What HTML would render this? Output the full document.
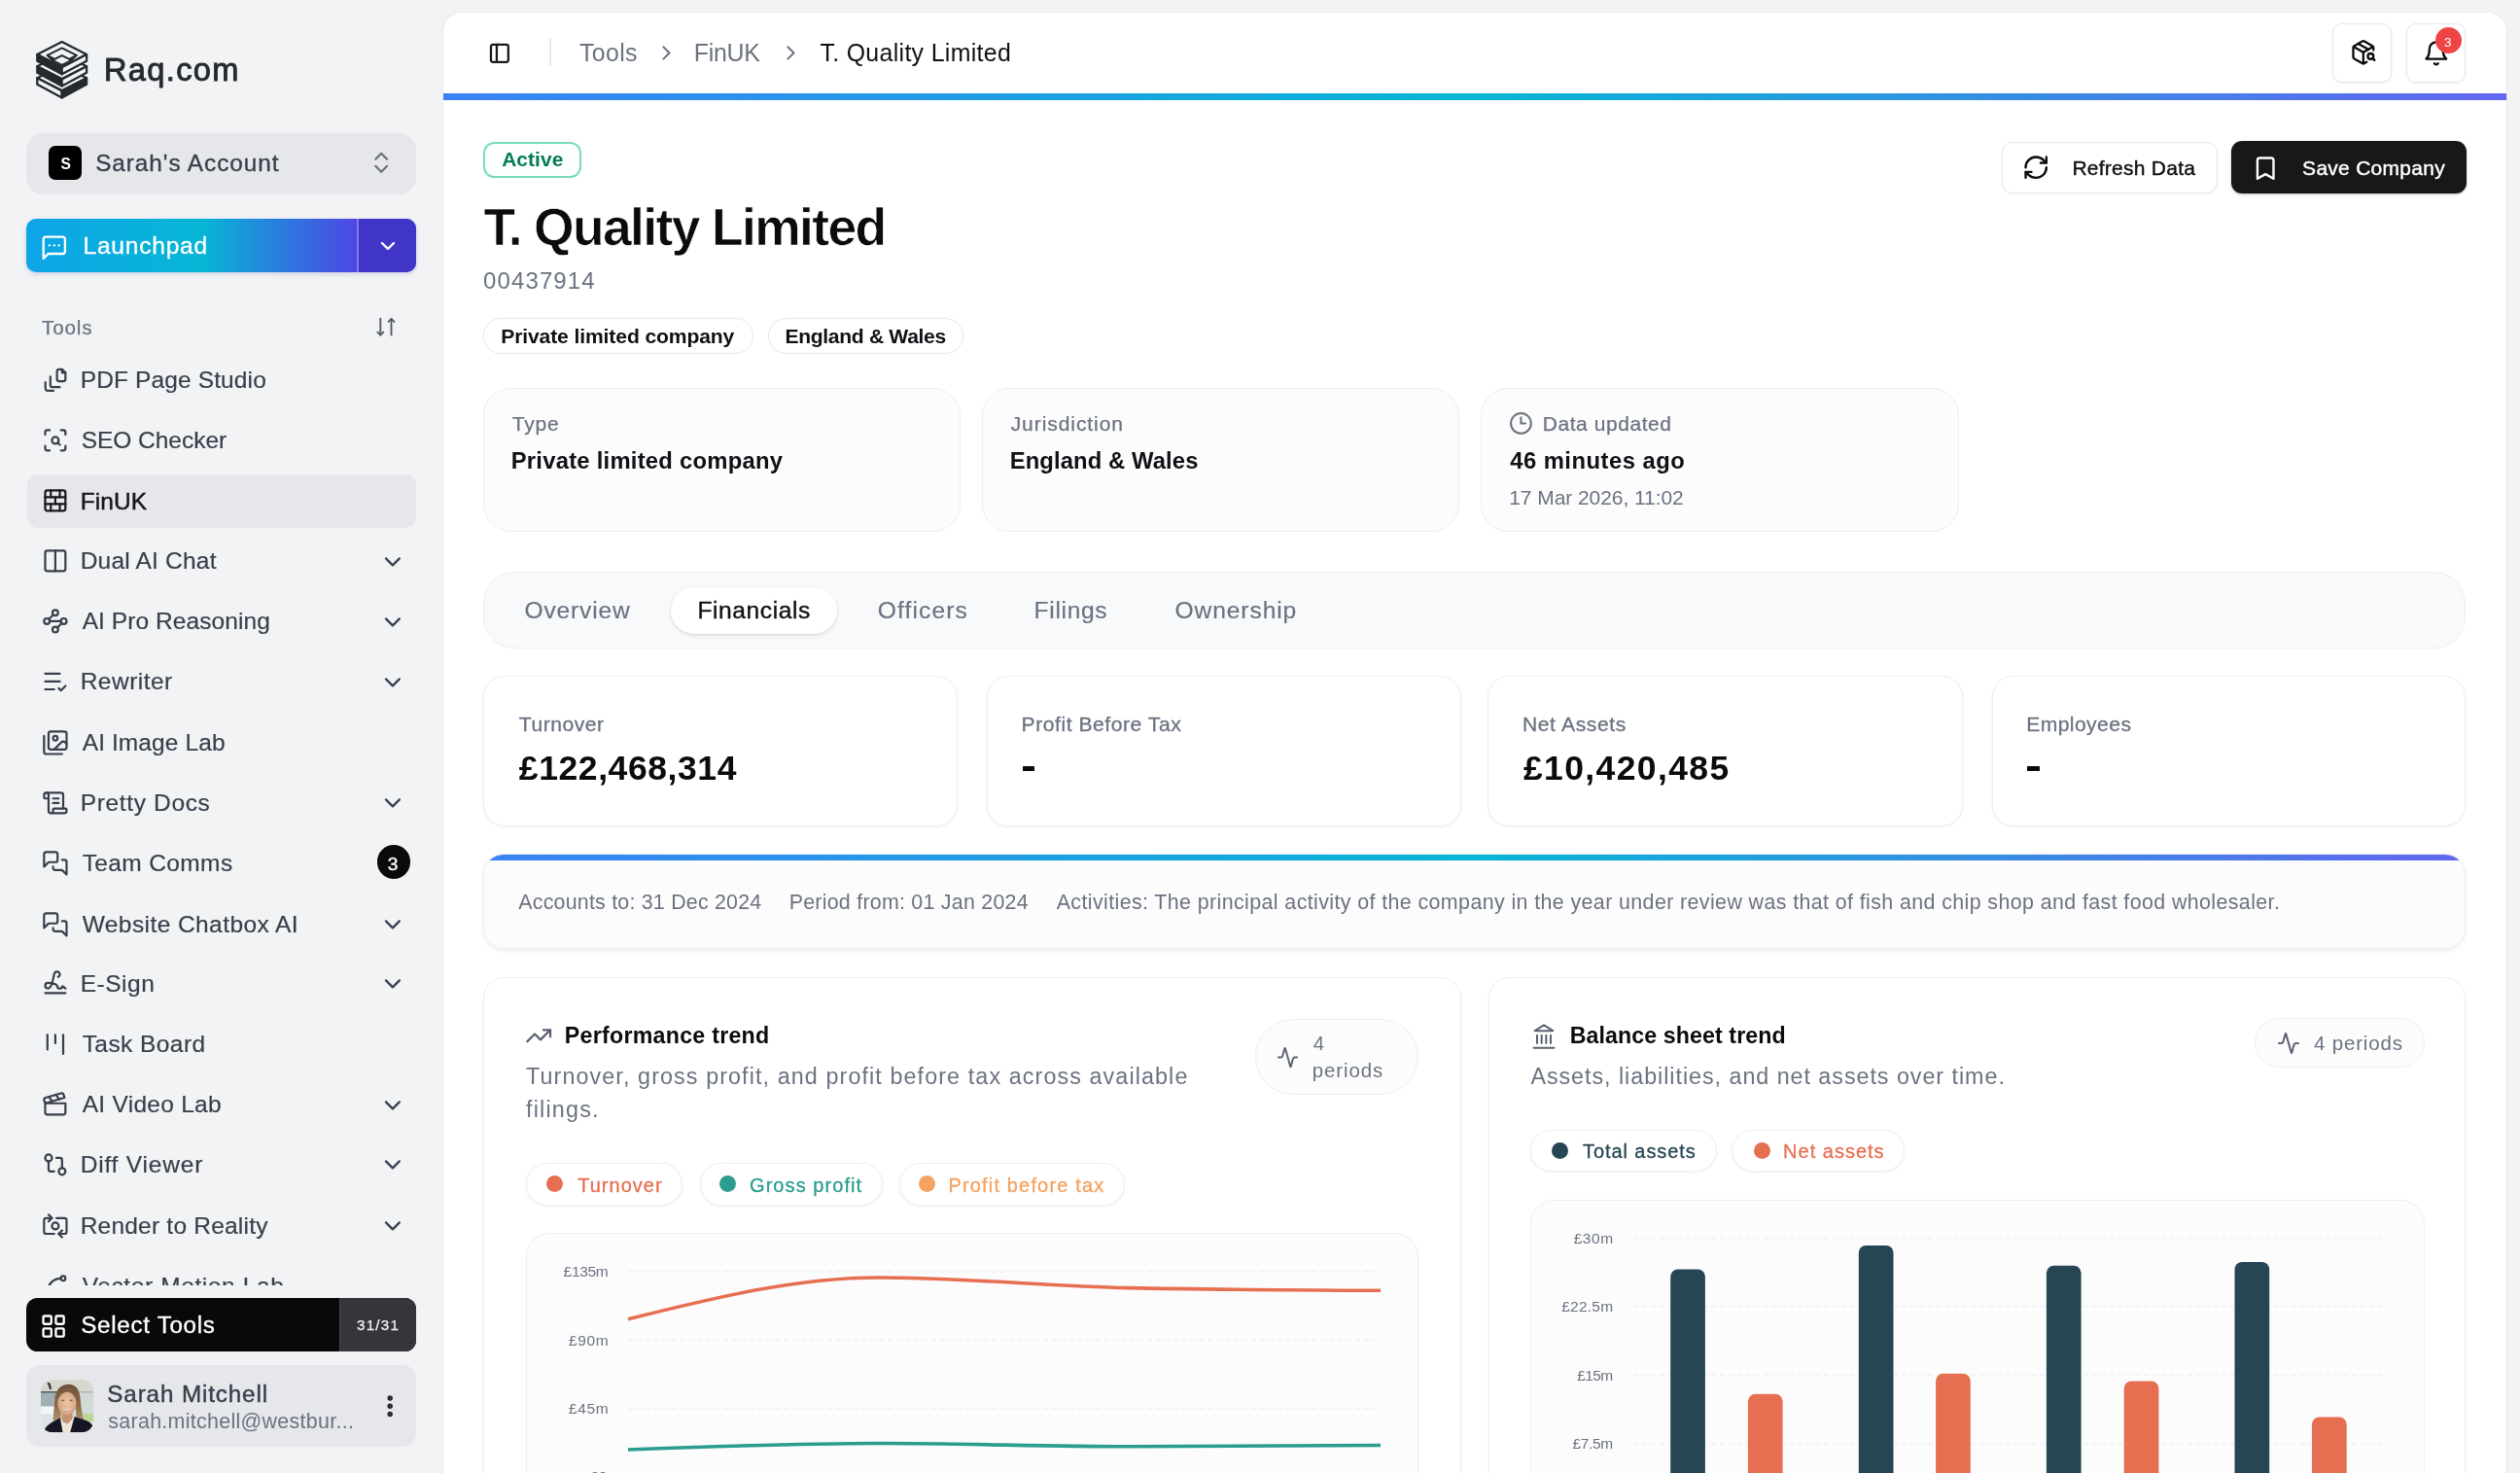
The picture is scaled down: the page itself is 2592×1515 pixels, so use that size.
<!DOCTYPE html><html><head><meta charset="utf-8"><title>T. Quality Limited</title><style>
html,body{margin:0;padding:0}body{width:2592px;height:1515px;overflow:hidden;position:relative;background:#f2f3f5;font-family:"Liberation Sans",sans-serif;}
span{display:block}svg{display:block;overflow:visible}

</style></head><body><div style="position:absolute;left:0;top:0;width:2592px;height:1515px;overflow:hidden;will-change:transform">
<svg style="position:absolute;left:37.2px;top:41.8px" width="53.4" height="60.4" viewBox="0 0 53.4 60.4" fill="none"><g stroke="#262a2f" stroke-width="2.3" stroke-linejoin="round"><polygon points="26.70,25.20 52.10,38.20 26.70,51.40 1.30,38.20" fill="#f2f3f5"/><polygon points="1.30,38.20 26.70,51.40 26.70,58.40 1.30,44.80" fill="#f2f3f5"/><polygon points="26.70,51.40 52.10,38.20 52.10,44.80 26.70,58.40" fill="#262a2f"/><polygon points="26.70,13.20 52.10,26.20 26.70,39.40 1.30,26.20" fill="#f2f3f5"/><polygon points="1.30,26.20 26.70,39.40 26.70,46.40 1.30,32.80" fill="#262a2f"/><polygon points="26.70,39.40 52.10,26.20 52.10,32.80 26.70,46.40" fill="#f2f3f5"/><polygon points="26.70,1.10 52.10,14.10 26.70,27.30 1.30,14.10" fill="#f2f3f5"/><polygon points="1.30,14.10 26.70,27.30 26.70,34.30 1.30,20.70" fill="#262a2f"/><polygon points="26.70,27.30 52.10,14.10 52.10,20.70 26.70,34.30" fill="#f2f3f5"/><polygon points="26.7,7.4 41.8,14.8 36.2,20 26.7,15.2 17.2,20 11.6,14.8" fill="#f2f3f5" stroke-width="2"/><polygon points="11.6,14.8 17.2,20 26.7,24.9 36.2,20 41.8,14.8 26.7,22.4" fill="#262a2f" stroke-width="1.6"/><polygon points="26.7,15.2 36.2,20 26.7,24.9 17.2,20" fill="#f2f3f5" stroke-width="1.8"/></g></svg>
<span id="logo" style="position:absolute;top:56.00px;font-size:32.6px;line-height:1;color:#262a2f;white-space:nowrap;left:107.00px;-webkit-text-stroke:0.9px #262a2f;letter-spacing:1.330px;">Raq.com</span>
<div style="position:absolute;left:27px;top:136.7px;width:401px;height:63px;background:#e6e7eb;border-radius:17.5px;"></div>
<div style="position:absolute;left:49.5px;top:150px;width:34.6px;height:34.5px;background:#000;border-radius:7px;"></div>
<span id="acS" style="position:absolute;top:161.00px;font-size:15.6px;line-height:1;color:#fff;white-space:nowrap;left:62.60px;font-weight:700;letter-spacing:-0.800px;">S</span>
<span id="acct" style="position:absolute;top:156.00px;font-size:24.3px;line-height:1;color:#393e4b;white-space:nowrap;left:98.20px;-webkit-text-stroke:0.35px #393e4b;letter-spacing:0.956px;">Sarah's Account</span>
<svg style="position:absolute;left:377.9px;top:152.5px;" width="28.4" height="28.4" viewBox="0 0 24 24" fill="none" stroke="#686c79" stroke-width="1.75" stroke-linecap="round" stroke-linejoin="round"><path d="m7 15 5 5 5-5"/><path d="m7 9 5-5 5 5"/></svg>
<div style="position:absolute;left:27px;top:225px;width:400.5px;height:55px;border-radius:10px;overflow:hidden;box-shadow:0 2px 5px rgba(60,60,160,.18);background:linear-gradient(90deg,#0ea5e9 0%,#06b6d4 45%,#2b7ade 66%,#4f46e5 85%,#5044e6 100%);"><div style="position:absolute;left:339.5px;top:0;width:2px;height:55px;background:rgba(255,255,255,.28)"></div><div style="position:absolute;left:341.5px;top:0;width:60px;height:55px;background:#4035c6"></div></div>
<svg style="position:absolute;left:40.6px;top:239.6px;" width="29.6" height="29.6" viewBox="0 0 24 24" fill="none" stroke="#fff" stroke-width="1.9" stroke-linecap="round" stroke-linejoin="round"><path d="M21 15a2 2 0 0 1-2 2H7l-4 4V5a2 2 0 0 1 2-2h14a2 2 0 0 1 2 2z"/><path d="M8 10h.01"/><path d="M12 10h.01"/><path d="M16 10h.01"/></svg>
<span id="launch" style="position:absolute;top:241.00px;font-size:24.6px;line-height:1;color:#fff;white-space:nowrap;left:85.50px;-webkit-text-stroke:0.35px #fff;letter-spacing:0.745px;">Launchpad</span>
<svg style="position:absolute;left:387px;top:241.3px;" width="24" height="24" viewBox="0 0 24 24" fill="none" stroke="#fff" stroke-width="2.4" stroke-linecap="round" stroke-linejoin="round"><path d="m6 9 6 6 6-6"/></svg>
<span id="toolsLbl" style="position:absolute;top:327.00px;font-size:20.6px;line-height:1;color:#6b7280;white-space:nowrap;left:43.00px;-webkit-text-stroke:0.25px #6b7280;letter-spacing:0.856px;">Tools</span>
<svg style="position:absolute;left:386px;top:325px;" width="22" height="22" viewBox="0 0 22 22" fill="none" stroke="#555a66" stroke-width="1.9" stroke-linecap="round" stroke-linejoin="round"><path d="M5.3 2.7V19.6"/><path d="M2.300 16.600l3 3 3-3"/><path d="M16.500 19.600V2.900"/><path d="M13.500 5.900l3-3 3 3"/></svg>
<div style="position:absolute;left:0;top:0;width:455px;height:1321.5px;overflow:hidden">
<svg style="position:absolute;left:42.55px;top:376.6px;" width="27.8" height="27.8" viewBox="0 0 24 24" fill="none" stroke="#393e4b" stroke-width="1.9" stroke-linecap="round" stroke-linejoin="round"><path d="M15.5 2.5h2.5l3 3v5.500a2 2 0 0 1-2 2h-3.500a2 2 0 0 1-2-2v-6.500a2 2 0 0 1 2-2z"/><path d="M18 2.500v3h3"/><path d="M7.600 9v7.300a2 2 0 0 0 2 2H16"/><path d="M3.200 14v5.500a2 2 0 0 0 2 2h5.200"/></svg>
<span id="sb0" style="position:absolute;top:379.00px;font-size:24.5px;line-height:1;color:#393e4b;white-space:nowrap;left:82.70px;-webkit-text-stroke:0.2px #393e4b;letter-spacing:0.130px;">PDF Page Studio</span>
<svg style="position:absolute;left:42.55px;top:439.1px;" width="27.8" height="27.8" viewBox="0 0 24 24" fill="none" stroke="#393e4b" stroke-width="1.9" stroke-linecap="round" stroke-linejoin="round"><path d="M3 7V5a2 2 0 0 1 2-2h2"/><path d="M17 3h2a2 2 0 0 1 2 2v2"/><path d="M21 17v2a2 2 0 0 1-2 2h-2"/><path d="M7 21H5a2 2 0 0 1-2-2v-2"/><circle cx="12" cy="12" r="3"/><path d="m16 16-1.9-1.9"/></svg>
<span id="sb1" style="position:absolute;top:441.00px;font-size:24.5px;line-height:1;color:#393e4b;white-space:nowrap;left:83.70px;-webkit-text-stroke:0.2px #393e4b;letter-spacing:-0.032px;">SEO Checker</span>
<div style="position:absolute;left:27.8px;top:487.7px;width:400.2px;height:55.5px;background:#e6e7eb;border-radius:10.7px;"></div>
<svg style="position:absolute;left:42.55px;top:501.2px;" width="27.8" height="27.8" viewBox="0 0 24 24" fill="none" stroke="#18181b" stroke-width="1.9" stroke-linecap="round" stroke-linejoin="round"><rect width="18" height="18" x="3" y="3" rx="2"/><path d="M12 9v6"/><path d="M16 15v6"/><path d="M16 3v6"/><path d="M3 15h18"/><path d="M3 9h18"/><path d="M8 15v6"/><path d="M8 3v6"/></svg>
<span id="sb2" style="position:absolute;top:504.00px;font-size:24.5px;line-height:1;color:#18181b;white-space:nowrap;left:82.70px;-webkit-text-stroke:0.45px #18181b;letter-spacing:0.068px;">FinUK</span>
<svg style="position:absolute;left:42.55px;top:563.1px;" width="27.8" height="27.8" viewBox="0 0 24 24" fill="none" stroke="#393e4b" stroke-width="1.9" stroke-linecap="round" stroke-linejoin="round"><rect width="18" height="18" x="3" y="3" rx="2"/><path d="M12 3v18"/></svg>
<span id="sb3" style="position:absolute;top:565.00px;font-size:24.5px;line-height:1;color:#393e4b;white-space:nowrap;left:82.70px;-webkit-text-stroke:0.2px #393e4b;letter-spacing:0.201px;">Dual AI Chat</span>
<svg style="position:absolute;left:389.9px;top:563.9px;" width="27.8" height="27.8" viewBox="0 0 24 24" fill="none" stroke="#374151" stroke-width="2" stroke-linecap="round" stroke-linejoin="round"><path d="m6 9 6 6 6-6"/></svg>
<svg style="position:absolute;left:42.55px;top:625.2px;" width="27.8" height="27.8" viewBox="0 0 24 24" fill="none" stroke="#393e4b" stroke-width="1.9" stroke-linecap="round" stroke-linejoin="round"><circle cx="12" cy="4.5" r="2.5"/><path d="m10.2 6.3-3.9 3.9"/><circle cx="4.5" cy="12" r="2.5"/><path d="M7 12h10"/><circle cx="19.5" cy="12" r="2.5"/><path d="m13.8 17.7 3.9-3.9"/><circle cx="12" cy="19.5" r="2.5"/></svg>
<span id="sb4" style="position:absolute;top:627.00px;font-size:24.5px;line-height:1;color:#393e4b;white-space:nowrap;left:84.70px;-webkit-text-stroke:0.2px #393e4b;letter-spacing:0.073px;">AI Pro Reasoning</span>
<svg style="position:absolute;left:389.9px;top:626px;" width="27.8" height="27.8" viewBox="0 0 24 24" fill="none" stroke="#374151" stroke-width="2" stroke-linecap="round" stroke-linejoin="round"><path d="m6 9 6 6 6-6"/></svg>
<svg style="position:absolute;left:42.55px;top:687.2px;" width="27.8" height="27.8" viewBox="0 0 24 24" fill="none" stroke="#393e4b" stroke-width="1.9" stroke-linecap="round" stroke-linejoin="round"><path d="M16 5H3"/><path d="M16 12H3"/><path d="M11 19H3"/><path d="m15 18 2 2 4-4"/></svg>
<span id="sb5" style="position:absolute;top:689.00px;font-size:24.5px;line-height:1;color:#393e4b;white-space:nowrap;left:82.70px;-webkit-text-stroke:0.2px #393e4b;letter-spacing:0.479px;">Rewriter</span>
<svg style="position:absolute;left:389.9px;top:688px;" width="27.8" height="27.8" viewBox="0 0 24 24" fill="none" stroke="#374151" stroke-width="2" stroke-linecap="round" stroke-linejoin="round"><path d="m6 9 6 6 6-6"/></svg>
<svg style="position:absolute;left:42.55px;top:749.6px;" width="27.8" height="27.8" viewBox="0 0 24 24" fill="none" stroke="#393e4b" stroke-width="1.9" stroke-linecap="round" stroke-linejoin="round"><path d="M18 22H4a2 2 0 0 1-2-2V6"/><path d="m22 13-1.296-1.296a2.41 2.41 0 0 0-3.408 0L11 18"/><circle cx="12" cy="8" r="2"/><rect width="16" height="16" x="6" y="2" rx="2"/></svg>
<span id="sb6" style="position:absolute;top:752.00px;font-size:24.5px;line-height:1;color:#393e4b;white-space:nowrap;left:84.70px;-webkit-text-stroke:0.2px #393e4b;letter-spacing:0.099px;">AI Image Lab</span>
<svg style="position:absolute;left:42.55px;top:811.6px;" width="27.8" height="27.8" viewBox="0 0 24 24" fill="none" stroke="#393e4b" stroke-width="1.9" stroke-linecap="round" stroke-linejoin="round"><path d="M15 12h-5"/><path d="M15 8h-5"/><path d="M19 17V5a2 2 0 0 0-2-2H4"/><path d="M8 21h12a2 2 0 0 0 2-2v-1a1 1 0 0 0-1-1H11a1 1 0 0 0-1 1v1a2 2 0 1 1-4 0V5a2 2 0 1 0-4 0v2a1 1 0 0 0 1 1h3"/></svg>
<span id="sb7" style="position:absolute;top:814.00px;font-size:24.5px;line-height:1;color:#393e4b;white-space:nowrap;left:82.70px;-webkit-text-stroke:0.2px #393e4b;letter-spacing:0.653px;">Pretty Docs</span>
<svg style="position:absolute;left:389.9px;top:812.4px;" width="27.8" height="27.8" viewBox="0 0 24 24" fill="none" stroke="#374151" stroke-width="2" stroke-linecap="round" stroke-linejoin="round"><path d="m6 9 6 6 6-6"/></svg>
<svg style="position:absolute;left:42.55px;top:873.6px;" width="27.8" height="27.8" viewBox="0 0 24 24" fill="none" stroke="#393e4b" stroke-width="1.9" stroke-linecap="round" stroke-linejoin="round"><path d="M14 9a2 2 0 0 1-2 2H6l-4 4V4a2 2 0 0 1 2-2h8a2 2 0 0 1 2 2z"/><path d="M18 9h2a2 2 0 0 1 2 2v11l-4-4h-6a2 2 0 0 1-2-2v-1"/></svg>
<span id="sb8" style="position:absolute;top:876.00px;font-size:24.5px;line-height:1;color:#393e4b;white-space:nowrap;left:84.70px;-webkit-text-stroke:0.2px #393e4b;letter-spacing:0.372px;">Team Comms</span>
<div style="position:absolute;left:387.5px;top:869.4px;width:34.5px;height:34.5px;background:#0b0b0d;border-radius:50%;"></div>
<span id="tc3" style="position:absolute;top:879.00px;font-size:19.2px;line-height:1;color:#fff;white-space:nowrap;left:398.70px;-webkit-text-stroke:0.35px #fff;letter-spacing:1.300px;">3</span>
<svg style="position:absolute;left:42.55px;top:936.5px;" width="27.8" height="27.8" viewBox="0 0 24 24" fill="none" stroke="#393e4b" stroke-width="1.9" stroke-linecap="round" stroke-linejoin="round"><path d="M14 9a2 2 0 0 1-2 2H6l-4 4V4a2 2 0 0 1 2-2h8a2 2 0 0 1 2 2z"/><path d="M18 9h2a2 2 0 0 1 2 2v11l-4-4h-6a2 2 0 0 1-2-2v-1"/></svg>
<span id="sb9" style="position:absolute;top:939.00px;font-size:24.5px;line-height:1;color:#393e4b;white-space:nowrap;left:84.70px;-webkit-text-stroke:0.2px #393e4b;letter-spacing:0.425px;">Website Chatbox AI</span>
<svg style="position:absolute;left:389.9px;top:937.3px;" width="27.8" height="27.8" viewBox="0 0 24 24" fill="none" stroke="#374151" stroke-width="2" stroke-linecap="round" stroke-linejoin="round"><path d="m6 9 6 6 6-6"/></svg>
<svg style="position:absolute;left:42.55px;top:997.4px;" width="27.8" height="27.8" viewBox="0 0 24 24" fill="none" stroke="#393e4b" stroke-width="1.9" stroke-linecap="round" stroke-linejoin="round"><path d="m21 17-2.156-1.868A.5.5 0 0 0 18 15.5v.5a1 1 0 0 1-1 1h-2a1 1 0 0 1-1-1c0-2.545-3.991-3.97-8.5-4a1 1 0 0 0 0 5c4.153 0 4.745-11.295 5.708-13.5a2.5 2.5 0 1 1 3.31 3.284"/><path d="M3 21h18"/></svg>
<span id="sb10" style="position:absolute;top:1000.00px;font-size:24.5px;line-height:1;color:#393e4b;white-space:nowrap;left:82.70px;-webkit-text-stroke:0.2px #393e4b;letter-spacing:0.518px;">E-Sign</span>
<svg style="position:absolute;left:389.9px;top:998.2px;" width="27.8" height="27.8" viewBox="0 0 24 24" fill="none" stroke="#374151" stroke-width="2" stroke-linecap="round" stroke-linejoin="round"><path d="m6 9 6 6 6-6"/></svg>
<svg style="position:absolute;left:42.55px;top:1059.4px;" width="27.8" height="27.8" viewBox="0 0 24 24" fill="none" stroke="#393e4b" stroke-width="1.9" stroke-linecap="round" stroke-linejoin="round"><path d="M5 4.6v13"/><path d="M12 4.600v7.400"/><path d="M19 4.600v17"/></svg>
<span id="sb11" style="position:absolute;top:1062.00px;font-size:24.5px;line-height:1;color:#393e4b;white-space:nowrap;left:84.70px;-webkit-text-stroke:0.2px #393e4b;letter-spacing:0.430px;">Task Board</span>
<svg style="position:absolute;left:42.55px;top:1122px;" width="27.8" height="27.8" viewBox="0 0 24 24" fill="none" stroke="#393e4b" stroke-width="1.9" stroke-linecap="round" stroke-linejoin="round"><path d="M20.2 6 3 11l-.9-2.4c-.3-1.1.3-2.2 1.3-2.5l13.5-4c1.1-.3 2.2.3 2.5 1.3Z"/><path d="m6.2 5.3 3.1 3.9"/><path d="m12.4 3.4 3.1 4"/><path d="M3 11h18v8a2 2 0 0 1-2 2H5a2 2 0 0 1-2-2Z"/></svg>
<span id="sb12" style="position:absolute;top:1124.00px;font-size:24.5px;line-height:1;color:#393e4b;white-space:nowrap;left:84.70px;-webkit-text-stroke:0.2px #393e4b;letter-spacing:0.279px;">AI Video Lab</span>
<svg style="position:absolute;left:389.9px;top:1122.8px;" width="27.8" height="27.8" viewBox="0 0 24 24" fill="none" stroke="#374151" stroke-width="2" stroke-linecap="round" stroke-linejoin="round"><path d="m6 9 6 6 6-6"/></svg>
<svg style="position:absolute;left:42.55px;top:1183.6px;" width="27.8" height="27.8" viewBox="0 0 24 24" fill="none" stroke="#393e4b" stroke-width="1.9" stroke-linecap="round" stroke-linejoin="round"><circle cx="18" cy="18" r="3"/><circle cx="6" cy="6" r="3"/><path d="M13 6h3a2 2 0 0 1 2 2v7"/><path d="M11 18H8a2 2 0 0 1-2-2V9"/></svg>
<span id="sb13" style="position:absolute;top:1186.00px;font-size:24.5px;line-height:1;color:#393e4b;white-space:nowrap;left:82.70px;-webkit-text-stroke:0.2px #393e4b;letter-spacing:0.810px;">Diff Viewer</span>
<svg style="position:absolute;left:389.9px;top:1184.4px;" width="27.8" height="27.8" viewBox="0 0 24 24" fill="none" stroke="#374151" stroke-width="2" stroke-linecap="round" stroke-linejoin="round"><path d="m6 9 6 6 6-6"/></svg>
<svg style="position:absolute;left:42.55px;top:1246.6px;" width="27.8" height="27.8" viewBox="0 0 24 24" fill="none" stroke="#393e4b" stroke-width="1.9" stroke-linecap="round" stroke-linejoin="round"><path d="M11 19H4a2 2 0 0 1-2-2V7a2 2 0 0 1 2-2h5"/><path d="M13 5h7a2 2 0 0 1 2 2v10a2 2 0 0 1-2 2h-5"/><circle cx="12" cy="12" r="3"/><path d="m18 22-3-3 3-3"/><path d="m6 2 3 3-3 3"/></svg>
<span id="sb14" style="position:absolute;top:1249.00px;font-size:24.5px;line-height:1;color:#393e4b;white-space:nowrap;left:82.70px;-webkit-text-stroke:0.2px #393e4b;letter-spacing:0.216px;">Render to Reality</span>
<svg style="position:absolute;left:389.9px;top:1247.4px;" width="27.8" height="27.8" viewBox="0 0 24 24" fill="none" stroke="#374151" stroke-width="2" stroke-linecap="round" stroke-linejoin="round"><path d="m6 9 6 6 6-6"/></svg>
<svg style="position:absolute;left:42.55px;top:1309.1px;" width="27.8" height="27.8" viewBox="0 0 24 24" fill="none" stroke="#393e4b" stroke-width="1.9" stroke-linecap="round" stroke-linejoin="round"><circle cx="19" cy="5" r="2"/><circle cx="5" cy="19" r="2"/><path d="M5 17A12 12 0 0 1 17 5"/></svg>
<span id="sb15" style="position:absolute;top:1311.00px;font-size:24.5px;line-height:1;color:#393e4b;white-space:nowrap;left:84.70px;-webkit-text-stroke:0.2px #393e4b;letter-spacing:0.603px;">Vector Motion Lab</span>
</div>
<div style="position:absolute;left:27px;top:1335px;width:400.8px;height:55.3px;background:#09090b;border-radius:11.5px;overflow:hidden;"><div style="position:absolute;left:322.2px;top:0;width:80px;height:56px;background:#35363b;border-left:1px solid #45464b"></div></div>
<svg style="position:absolute;left:41.4px;top:1349.5px;" width="28.2" height="28.2" viewBox="0 0 24 24" fill="none" stroke="#fff" stroke-width="2" stroke-linecap="round" stroke-linejoin="round"><rect width="7" height="7" x="3" y="3" rx="1"/><rect width="7" height="7" x="14" y="3" rx="1"/><rect width="7" height="7" x="14" y="14" rx="1"/><rect width="7" height="7" x="3" y="14" rx="1"/></svg>
<span id="selTools" style="position:absolute;top:1351.00px;font-size:24.2px;line-height:1;color:#fff;white-space:nowrap;left:83.20px;-webkit-text-stroke:0.35px #fff;letter-spacing:0.708px;">Select Tools</span>
<span id="s3131" style="position:absolute;top:1355.00px;font-size:15.2px;line-height:1;color:#f4f4f5;white-space:nowrap;left:367.00px;-webkit-text-stroke:0.25px #f4f4f5;letter-spacing:1.235px;">31/31</span>
<div style="position:absolute;left:27px;top:1404.2px;width:400.8px;height:83.8px;background:#e6e7eb;border-radius:14px;"></div>
<svg style="position:absolute;left:42px;top:1418.8px" width="54.2" height="54.2" viewBox="0 0 54 54">
<defs><clipPath id="avc"><rect width="54" height="54" rx="11.8"/></clipPath>
<filter id="avb" x="-10%" y="-10%" width="120%" height="120%"><feGaussianBlur stdDeviation="0.75"/></filter>
<linearGradient id="avh" x1="0" y1="0" x2="0" y2="1"><stop offset="0" stop-color="#6f5138"/><stop offset=".55" stop-color="#8a6a49"/><stop offset="1" stop-color="#b39468"/></linearGradient>
<radialGradient id="avf" cx=".5" cy=".45" r=".6"><stop offset="0" stop-color="#ecc6a8"/><stop offset="1" stop-color="#d3a07f"/></radialGradient></defs>
<g clip-path="url(#avc)"><g filter="url(#avb)">
<rect x="-3" y="-3" width="60" height="60" fill="#d3d8d2"/>
<rect x="-3" y="-3" width="60" height="15" fill="#d9d8cf"/>
<rect x="-3" y="12" width="20" height="1.8" fill="#4d5552"/>
<rect x="-3" y="13.5" width="19" height="14" fill="#9fb0b6"/>
<rect x="-3" y="27.5" width="19" height="8" fill="#f3f5f7"/>
<rect x="-3" y="35.5" width="19" height="20" fill="#dfe3e3"/>
<rect x="36" y="12" width="21" height="24" fill="#d2dad5"/>
<rect x="38" y="12" width="19" height="1.4" fill="#aeb6b0"/>
<rect x="44" y="35" width="13" height="8" fill="#b9d692"/>
<rect x="36" y="43" width="21" height="12" fill="#e3e6e2"/>
<path d="M6.5 2.5 l3 1 l1.8 6 l-2.3 .8 z" fill="#3b3e39"/>
<path d="M28.6 4.8 C21 4.8 15 10 14.3 20 C13.6 29 13 36 12.3 41.5 L20 43 L21 30 L36 30 L36.5 42 L44 41.5 C42.5 36 41 28 40.5 20 C40 10 35.5 4.8 28.6 4.8Z" fill="url(#avh)"/>
<rect x="21.5" y="33" width="11" height="11" fill="#c3906f"/>
<ellipse cx="26.8" cy="24.3" rx="9.6" ry="12" fill="url(#avf)"/>
<path d="M17.5 20 C18 11.5 23 8.8 28 8.8 C33.5 8.8 36.8 13 36.8 20.5 C34.5 16 31.5 13 27.5 12.200 C23 13 19.5 15.5 17.5 20Z" fill="#7b5b3f"/>
<ellipse cx="22.7" cy="21.3" rx="1.900" ry=".8" fill="#6a4a38" opacity=".75"/><ellipse cx="31" cy="21.3" rx="1.900" ry=".8" fill="#6a4a38" opacity=".75"/>
<path d="M21.6 29.3 Q26.8 34.5 32 29.3 Q26.8 31.3 21.6 29.3Z" fill="#f6efe9"/>
<path d="M21.6 29.3 Q26.8 35.5 32 29.3 Q26.8 33.3 21.6 29.3Z" fill="#c9806f" opacity=".55"/>
<path d="M17 54 L20.5 40 L26.5 47 L33.5 38.5 L33 54Z" fill="#efe6d7"/>
<path d="M23.5 40 L26.8 45.5 L31 39 L29.5 37 L26.8 40 L24.5 37.5Z" fill="#c79474"/>
<path d="M3.5 54 C4 47.5 9 45 19.8 39.200 L22.5 54Z" fill="#121827"/>
<path d="M30 54 L34.6 37.8 C42 40.5 51 42 53 47 L54 54Z" fill="#121827"/>
</g></g></svg>
<span id="uname" style="position:absolute;top:1422.00px;font-size:24.2px;line-height:1;color:#393e4b;white-space:nowrap;left:110.30px;-webkit-text-stroke:0.45px #393e4b;letter-spacing:0.886px;">Sarah Mitchell</span>
<span id="uemail" style="position:absolute;top:1452.00px;font-size:21.4px;line-height:1;color:#6b7280;white-space:nowrap;left:111.30px;letter-spacing:0.309px;">sarah.mitchell@westbur...</span>
<svg style="position:absolute;left:386.8px;top:1432px;" width="28.4" height="28.4" viewBox="0 0 24 24" fill="none" stroke="#27272a" stroke-width="2.6" stroke-linecap="round" stroke-linejoin="round"><circle cx="12" cy="12" r="1"/><circle cx="12" cy="5" r="1"/><circle cx="12" cy="19" r="1"/></svg>
<div style="position:absolute;left:455.7px;top:13.4px;width:2122.6px;height:1540px;background:#fff;border-radius:19.5px;box-shadow:0 0 0 1px rgba(15,23,42,.035),0 1px 3px rgba(15,23,42,.06);"></div>
<svg style="position:absolute;left:501.9px;top:42.7px;" width="23.8" height="23.8" viewBox="0 0 24 24" fill="none" stroke="#18181b" stroke-width="2.3" stroke-linecap="round" stroke-linejoin="round"><rect width="18" height="18" x="3" y="3" rx="2"/><path d="M9 3v18"/></svg>
<div style="position:absolute;left:565px;top:40px;width:1.6px;height:27.5px;background:#e5e7eb;"></div>
<span id="bc1" style="position:absolute;top:42.00px;font-size:24.9px;line-height:1;color:#6b7280;white-space:nowrap;left:596.00px;letter-spacing:0.335px;">Tools</span>
<svg style="position:absolute;left:673.3px;top:42.2px;" width="24.9" height="24.9" viewBox="0 0 24 24" fill="none" stroke="#6b7280" stroke-width="1.9" stroke-linecap="round" stroke-linejoin="round"><path d="m9 18 6-6-6-6"/></svg>
<span id="bc2" style="position:absolute;top:42.00px;font-size:24.9px;line-height:1;color:#6b7280;white-space:nowrap;left:713.80px;letter-spacing:-0.263px;">FinUK</span>
<svg style="position:absolute;left:800.6px;top:42.2px;" width="24.9" height="24.9" viewBox="0 0 24 24" fill="none" stroke="#6b7280" stroke-width="1.9" stroke-linecap="round" stroke-linejoin="round"><path d="m9 18 6-6-6-6"/></svg>
<span id="bc3" style="position:absolute;top:42.00px;font-size:24.9px;line-height:1;color:#0f1115;white-space:nowrap;left:843.40px;letter-spacing:0.326px;">T. Quality Limited</span>
<div style="position:absolute;left:2398.9px;top:24.3px;width:61.2px;height:60.4px;box-sizing:border-box;border:1.6px solid #e6e8ed;border-radius:10px;background:#fff;box-shadow:0 1px 2.5px rgba(15,23,42,.07);"></div>
<div style="position:absolute;left:2475.2px;top:24.3px;width:61.2px;height:60.4px;box-sizing:border-box;border:1.6px solid #e6e8ed;border-radius:10px;background:#fff;box-shadow:0 1px 2.5px rgba(15,23,42,.07);"></div>
<svg style="position:absolute;left:2416.6px;top:40.1px;" width="27.7" height="27.7" viewBox="0 0 24 24" fill="none" stroke="#0b0b0d" stroke-width="2" stroke-linecap="round" stroke-linejoin="round"><path d="M21 10V8a2 2 0 0 0-1-1.73l-7-4a2 2 0 0 0-2 0l-7 4A2 2 0 0 0 3 8v8a2 2 0 0 0 1 1.73l7 4a2 2 0 0 0 2 0l2-1.14"/><path d="m7.5 4.27 9 5.15"/><polyline points="3.29 7 12 12 20.71 7"/><line x1="12" x2="12" y1="22" y2="12"/><circle cx="18.5" cy="15.5" r="2.5"/><path d="M20.27 17.27 22 19"/></svg>
<svg style="position:absolute;left:2491.7px;top:41px;" width="27.6" height="27.6" viewBox="0 0 24 24" fill="none" stroke="#0b0b0d" stroke-width="2" stroke-linecap="round" stroke-linejoin="round"><path d="M6 8a6 6 0 0 1 12 0c0 7 3 9 3 9H3s3-2 3-9"/><path d="M10.3 21a1.94 1.94 0 0 0 3.4 0"/></svg>
<div style="position:absolute;left:2505.3px;top:28.4px;width:26.9px;height:26.9px;background:#ef4444;border-radius:50%;"></div>
<span id="bell3" style="position:absolute;top:37.00px;font-size:13.6px;line-height:1;color:#fff;white-space:nowrap;left:2513.90px;letter-spacing:1.300px;">3</span>
<div style="position:absolute;left:455.7px;top:95.8px;width:2122.6px;height:7.5px;background:linear-gradient(90deg,#3b82f6 0%,#06b6d4 50%,#6366f1 100%);"></div>
<div style="position:absolute;left:496.5px;top:145.7px;width:101.8px;height:37.2px;box-sizing:border-box;border:2px solid #79dbb8;border-radius:11.5px;background:#fcfffe;"></div>
<span id="active" style="position:absolute;top:154.00px;font-size:20.9px;line-height:1;color:#067a57;white-space:nowrap;left:516.20px;font-weight:700;letter-spacing:0.083px;">Active</span>
<span id="title" style="position:absolute;top:207.00px;font-size:53.4px;line-height:1;color:#0b0b0d;white-space:nowrap;left:497.60px;font-weight:700;letter-spacing:-1.612px;-webkit-text-stroke:0.7px #fff;">T. Quality Limited</span>
<span id="cno" style="position:absolute;top:277.00px;font-size:24px;line-height:1;color:#6b7280;white-space:nowrap;left:497.00px;letter-spacing:1.124px;">00437914</span>
<div style="position:absolute;left:496.8px;top:327px;width:278px;height:37.1px;box-sizing:border-box;border:1.6px solid #e5e7eb;border-radius:19px;background:#fff;"></div>
<span id="tag1" style="position:absolute;top:335.00px;font-size:21.1px;line-height:1;color:#0f1115;white-space:nowrap;left:515.20px;font-weight:700;letter-spacing:-0.115px;">Private limited company</span>
<div style="position:absolute;left:789.6px;top:327px;width:201.4px;height:37.1px;box-sizing:border-box;border:1.6px solid #e5e7eb;border-radius:19px;background:#fff;"></div>
<span id="tag2" style="position:absolute;top:335.00px;font-size:21.1px;line-height:1;color:#0f1115;white-space:nowrap;left:807.40px;font-weight:700;letter-spacing:-0.322px;">England &amp; Wales</span>
<div style="position:absolute;left:2058.6px;top:145.7px;width:222.4px;height:52.9px;box-sizing:border-box;border:1.6px solid #e5e7eb;border-radius:11px;background:#fff;box-shadow:0 1px 2px rgba(15,23,42,.05);"></div>
<svg style="position:absolute;left:2079.9px;top:158.4px;" width="28.4" height="28.4" viewBox="0 0 24 24" fill="none" stroke="#0b0b0d" stroke-width="2" stroke-linecap="round" stroke-linejoin="round"><path d="M3 12a9 9 0 0 1 9-9 9.75 9.75 0 0 1 6.74 2.74L21 8"/><path d="M21 3v5h-5"/><path d="M21 12a9 9 0 0 1-9 9 9.75 9.75 0 0 1-6.74-2.74L3 16"/><path d="M8 16H3v5"/></svg>
<span id="refresh" style="position:absolute;top:162.00px;font-size:21px;line-height:1;color:#0f1115;white-space:nowrap;left:2131.40px;-webkit-text-stroke:0.4px #0f1115;letter-spacing:0.260px;">Refresh Data</span>
<div style="position:absolute;left:2295.3px;top:145.3px;width:241.4px;height:54.1px;border-radius:11px;background:#18181b;box-shadow:0 1px 3px rgba(0,0,0,.25);"></div>
<svg style="position:absolute;left:2315.5px;top:158.6px;" width="28.4" height="28.4" viewBox="0 0 24 24" fill="none" stroke="#fff" stroke-width="2" stroke-linecap="round" stroke-linejoin="round"><path d="m19 21-7-4-7 4V5a2 2 0 0 1 2-2h10a2 2 0 0 1 2 2v16z"/></svg>
<span id="save" style="position:absolute;top:162.00px;font-size:21px;line-height:1;color:#fff;white-space:nowrap;left:2368.10px;-webkit-text-stroke:0.4px #fff;letter-spacing:0.275px;">Save Company</span>
<div style="position:absolute;left:497.2px;top:399.3px;width:490.5px;height:147.5px;box-sizing:border-box;border:1.6px solid #eceef2;border-radius:28.4px;background:#fcfcfd;"></div>
<div style="position:absolute;left:1010px;top:399.3px;width:491.2px;height:147.5px;box-sizing:border-box;border:1.6px solid #eceef2;border-radius:28.4px;background:#fcfcfd;"></div>
<div style="position:absolute;left:1523.1px;top:399.3px;width:492.2px;height:147.5px;box-sizing:border-box;border:1.6px solid #eceef2;border-radius:28.4px;background:#fcfcfd;"></div>
<span id="ic1l" style="position:absolute;top:425.00px;font-size:21px;line-height:1;color:#6b7280;white-space:nowrap;left:526.70px;-webkit-text-stroke:0.25px #6b7280;letter-spacing:0.817px;">Type</span>
<span id="ic1v" style="position:absolute;top:462.00px;font-size:23.8px;line-height:1;color:#0f1115;white-space:nowrap;left:525.70px;font-weight:700;letter-spacing:0.249px;">Private limited company</span>
<span id="ic2l" style="position:absolute;top:425.00px;font-size:21px;line-height:1;color:#6b7280;white-space:nowrap;left:1039.70px;-webkit-text-stroke:0.25px #6b7280;letter-spacing:0.931px;">Jurisdiction</span>
<span id="ic2v" style="position:absolute;top:462.00px;font-size:23.8px;line-height:1;color:#0f1115;white-space:nowrap;left:1038.70px;font-weight:700;letter-spacing:0.112px;">England &amp; Wales</span>
<svg style="position:absolute;left:1552.1px;top:422.5px;" width="24.9" height="24.9" viewBox="0 0 24 24" fill="none" stroke="#6b7280" stroke-width="2" stroke-linecap="round" stroke-linejoin="round"><circle cx="12" cy="12" r="10"/><polyline points="12 6 12 12 16.5 12"/></svg>
<span id="ic3l" style="position:absolute;top:425.00px;font-size:21px;line-height:1;color:#6b7280;white-space:nowrap;left:1586.70px;-webkit-text-stroke:0.25px #6b7280;letter-spacing:0.562px;">Data updated</span>
<span id="ic3v" style="position:absolute;top:462.00px;font-size:23.8px;line-height:1;color:#0f1115;white-space:nowrap;left:1553.20px;font-weight:700;letter-spacing:0.485px;">46 minutes ago</span>
<span id="ic3d" style="position:absolute;top:501.00px;font-size:21px;line-height:1;color:#6b7280;white-space:nowrap;left:1552.20px;letter-spacing:-0.058px;">17 Mar 2026, 11:02</span>
<div style="position:absolute;left:497.2px;top:588.3px;width:2039.2px;height:78.4px;box-sizing:border-box;border:1.6px solid #eceef2;border-radius:32px;background:#f8f9fb;"></div>
<div style="position:absolute;left:689.8px;top:604.3px;width:171px;height:47.9px;border-radius:24px;background:#fff;box-shadow:0 1.5px 4px rgba(15,23,42,.11),0 1px 2px rgba(15,23,42,.06);"></div>
<span id="tab1" style="position:absolute;top:616.00px;font-size:24.6px;line-height:1;color:#6b7280;white-space:nowrap;left:539.60px;-webkit-text-stroke:0.2px #6b7280;letter-spacing:0.795px;">Overview</span>
<span id="tab2" style="position:absolute;top:616.00px;font-size:24.6px;line-height:1;color:#0f1115;white-space:nowrap;left:717.50px;-webkit-text-stroke:0.4px #0f1115;letter-spacing:0.564px;">Financials</span>
<span id="tab3" style="position:absolute;top:616.00px;font-size:24.6px;line-height:1;color:#6b7280;white-space:nowrap;left:902.70px;-webkit-text-stroke:0.2px #6b7280;letter-spacing:1.117px;">Officers</span>
<span id="tab4" style="position:absolute;top:616.00px;font-size:24.6px;line-height:1;color:#6b7280;white-space:nowrap;left:1063.60px;-webkit-text-stroke:0.2px #6b7280;letter-spacing:0.655px;">Filings</span>
<span id="tab5" style="position:absolute;top:616.00px;font-size:24.6px;line-height:1;color:#6b7280;white-space:nowrap;left:1208.50px;-webkit-text-stroke:0.2px #6b7280;letter-spacing:0.903px;">Ownership</span>
<div style="position:absolute;left:497.2px;top:694.9px;width:487.6px;height:155px;box-sizing:border-box;border:1.6px solid #eceef2;border-radius:22px;background:#fff;box-shadow:0 1px 3px rgba(15,23,42,.05);"></div>
<span id="st0l" style="position:absolute;top:734.00px;font-size:21.1px;line-height:1;color:#6b7280;white-space:nowrap;left:533.80px;-webkit-text-stroke:0.3px #6b7280;letter-spacing:0.529px;">Turnover</span>
<span id="st0v" style="position:absolute;top:773.00px;font-size:35.5px;line-height:1;color:#0b0b0d;white-space:nowrap;left:533.80px;font-weight:700;letter-spacing:0.589px;">£122,468,314</span>
<div style="position:absolute;left:1015px;top:694.9px;width:487.5px;height:155px;box-sizing:border-box;border:1.6px solid #eceef2;border-radius:22px;background:#fff;box-shadow:0 1px 3px rgba(15,23,42,.05);"></div>
<span id="st1l" style="position:absolute;top:734.00px;font-size:21.1px;line-height:1;color:#6b7280;white-space:nowrap;left:1050.60px;-webkit-text-stroke:0.3px #6b7280;letter-spacing:0.539px;">Profit Before Tax</span>
<div style="position:absolute;left:1051.7px;top:788.2px;width:12.4px;height:4.6px;background:#0b0b0d;border-radius:.6px;"></div>
<div style="position:absolute;left:1530.3px;top:694.9px;width:488.8px;height:155px;box-sizing:border-box;border:1.6px solid #eceef2;border-radius:22px;background:#fff;box-shadow:0 1px 3px rgba(15,23,42,.05);"></div>
<span id="st2l" style="position:absolute;top:734.00px;font-size:21.1px;line-height:1;color:#6b7280;white-space:nowrap;left:1565.90px;-webkit-text-stroke:0.3px #6b7280;letter-spacing:0.629px;">Net Assets</span>
<span id="st2v" style="position:absolute;top:773.00px;font-size:35.5px;line-height:1;color:#0b0b0d;white-space:nowrap;left:1566.90px;font-weight:700;letter-spacing:1.393px;">£10,420,485</span>
<div style="position:absolute;left:2048.6px;top:694.9px;width:487.1px;height:155px;box-sizing:border-box;border:1.6px solid #eceef2;border-radius:22px;background:#fff;box-shadow:0 1px 3px rgba(15,23,42,.05);"></div>
<span id="st3l" style="position:absolute;top:734.00px;font-size:21.1px;line-height:1;color:#6b7280;white-space:nowrap;left:2084.20px;-webkit-text-stroke:0.3px #6b7280;letter-spacing:0.425px;">Employees</span>
<div style="position:absolute;left:2085.3px;top:788.2px;width:12.4px;height:4.6px;background:#0b0b0d;border-radius:.6px;"></div>
<div style="position:absolute;left:497.3px;top:878.3px;width:2038.7px;height:97.6px;box-sizing:border-box;border:1.6px solid #eceef2;border-radius:21px;background:#fcfcfd;overflow:hidden;box-shadow:0 2px 5px rgba(15,23,42,.07);"><div style="position:absolute;left:-2px;top:-2px;width:2042px;height:7.6px;background:linear-gradient(90deg,#3b82f6 0%,#06b6d4 50%,#6366f1 100%)"></div></div>
<span id="ac1" style="position:absolute;top:918.00px;font-size:21.4px;line-height:1;color:#6b7280;white-space:nowrap;left:533.30px;letter-spacing:0.215px;">Accounts to: 31 Dec 2024</span>
<span id="ac2" style="position:absolute;top:918.00px;font-size:21.4px;line-height:1;color:#6b7280;white-space:nowrap;left:811.70px;letter-spacing:0.248px;">Period from: 01 Jan 2024</span>
<span id="ac3" style="position:absolute;top:918.00px;font-size:21.4px;line-height:1;color:#6b7280;white-space:nowrap;left:1086.70px;letter-spacing:0.398px;">Activities: The principal activity of the company in the year under review was that of fish and chip shop and fast food wholesaler.</span>
<div style="position:absolute;left:497.3px;top:1005.3px;width:1005.3px;height:560px;box-sizing:border-box;border:1.6px solid #eceef2;border-radius:21.5px;background:#fff;box-shadow:0 1px 3px rgba(15,23,42,.04);"></div>
<svg style="position:absolute;left:539.7px;top:1050.8px;" width="28.4" height="28.4" viewBox="0 0 24 24" fill="none" stroke="#5b6170" stroke-width="1.9" stroke-linecap="round" stroke-linejoin="round"><polyline points="22 7 13.5 15.5 8.5 10.5 2 17"/><polyline points="16 7 22 7 22 13"/></svg>
<span id="pt" style="position:absolute;top:1054.00px;font-size:23.2px;line-height:1;color:#0b0b0d;white-space:nowrap;left:580.80px;font-weight:700;letter-spacing:0.262px;">Performance trend</span>
<span id="pd1" style="position:absolute;top:1096.00px;font-size:23.3px;line-height:1;color:#6b7280;white-space:nowrap;left:541.00px;letter-spacing:1.105px;">Turnover, gross profit, and profit before tax across available</span>
<span id="pd2" style="position:absolute;top:1130.00px;font-size:23.3px;line-height:1;color:#6b7280;white-space:nowrap;left:541.00px;letter-spacing:1.205px;">filings.</span>
<div style="position:absolute;left:1290.5px;top:1047.5px;width:168.6px;height:78.5px;box-sizing:border-box;border:1.6px solid #eceef2;border-radius:39px;background:#fcfcfd;"></div>
<svg style="position:absolute;left:1312.7px;top:1076.4px;" width="23.1" height="23.1" viewBox="0 0 24 24" fill="none" stroke="#5b6170" stroke-width="2" stroke-linecap="round" stroke-linejoin="round"><path d="M22 12h-2.48a2 2 0 0 0-1.93 1.46l-2.35 8.36a.25.25 0 0 1-.48 0L9.24 2.18a.25.25 0 0 0-.48 0l-2.35 8.36A2 2 0 0 1 4.49 12H2"/></svg>
<span id="pp1" style="position:absolute;top:1063.00px;font-size:20.4px;line-height:1;color:#6b7280;white-space:nowrap;left:1350.80px;letter-spacing:-0.300px;">4</span>
<span id="pp2" style="position:absolute;top:1091.00px;font-size:20.4px;line-height:1;color:#6b7280;white-space:nowrap;left:1349.80px;letter-spacing:0.920px;">periods</span>
<div style="position:absolute;left:541px;top:1196.2px;width:161.4px;height:43.4px;box-sizing:border-box;border:1.6px solid #eceef2;border-radius:21.7px;background:#fff;box-shadow:0 1px 3px rgba(15,23,42,.06);"></div>
<div style="position:absolute;left:562.2px;top:1209.4px;width:17px;height:17px;background:#e76f51;border-radius:50%;"></div>
<span id="lg1" style="position:absolute;top:1209.00px;font-size:20px;line-height:1;color:#e76f51;white-space:nowrap;left:594.20px;-webkit-text-stroke:0.3px #e76f51;letter-spacing:1.025px;">Turnover</span>
<div style="position:absolute;left:719.6px;top:1196.2px;width:188.3px;height:43.4px;box-sizing:border-box;border:1.6px solid #eceef2;border-radius:21.7px;background:#fff;box-shadow:0 1px 3px rgba(15,23,42,.06);"></div>
<div style="position:absolute;left:740px;top:1209.4px;width:17px;height:17px;background:#2a9d8f;border-radius:50%;"></div>
<span id="lg2" style="position:absolute;top:1209.00px;font-size:20px;line-height:1;color:#2a9d8f;white-space:nowrap;left:771.00px;-webkit-text-stroke:0.3px #2a9d8f;letter-spacing:1.072px;">Gross profit</span>
<div style="position:absolute;left:924.5px;top:1196.2px;width:232.3px;height:43.4px;box-sizing:border-box;border:1.6px solid #eceef2;border-radius:21.7px;background:#fff;box-shadow:0 1px 3px rgba(15,23,42,.06);"></div>
<div style="position:absolute;left:945.3px;top:1209.4px;width:17px;height:17px;background:#f4a261;border-radius:50%;"></div>
<span id="lg3" style="position:absolute;top:1209.00px;font-size:20px;line-height:1;color:#f4a261;white-space:nowrap;left:975.50px;-webkit-text-stroke:0.3px #f4a261;letter-spacing:1.157px;">Profit before tax</span>
<div style="position:absolute;left:541px;top:1268.4px;width:918px;height:300px;box-sizing:border-box;border:1.6px solid #eceef2;border-radius:24px;background:#fcfcfc;"></div>
<svg style="position:absolute;left:0;top:0" width="2592" height="1515" viewBox="0 0 2592 1515" fill="none"><g stroke="#eff1f4" stroke-width="1.6" stroke-dasharray="5.3 3.6"><line x1="646" x2="1420" y1="1307.9" y2="1307.9"/><line x1="646" x2="1420" y1="1378.4" y2="1378.4"/><line x1="646" x2="1420" y1="1448.8" y2="1448.8"/><line x1="646" x2="1420" y1="1519.2" y2="1519.2"/></g><path d="M646.00,1356.70C732.00,1335.35 818.00,1314.00 904.00,1314.00C990.00,1314.00 1076.00,1322.80 1162.00,1324.60C1248.00,1326.40 1334.00,1326.85 1420.00,1327.30" stroke="#e76f51" stroke-width="3.6" stroke-linecap="butt"/><path d="M646.00,1491.00C732.00,1487.75 818.00,1484.50 904.00,1484.50C990.00,1484.50 1076.00,1487.80 1162.00,1487.80C1248.00,1487.80 1334.00,1487.15 1420.00,1486.50" stroke="#2a9d8f" stroke-width="3.6" stroke-linecap="butt"/></svg>
<span id="py135m" style="position:absolute;top:1300.00px;font-size:15.5px;line-height:1;color:#6b7280;white-space:nowrap;right:1966.61px;letter-spacing:-0.320px;">£135m</span>
<span id="py90m" style="position:absolute;top:1371.00px;font-size:15.5px;line-height:1;color:#6b7280;white-space:nowrap;right:1965.64px;letter-spacing:0.646px;">£90m</span>
<span id="py45m" style="position:absolute;top:1441.00px;font-size:15.5px;line-height:1;color:#6b7280;white-space:nowrap;right:1965.64px;letter-spacing:0.646px;">£45m</span>
<span id="py0" style="position:absolute;top:1511.00px;font-size:15.5px;line-height:1;color:#6b7280;white-space:nowrap;right:1967.70px;letter-spacing:-0.120px;">£0</span>
<div style="position:absolute;left:1530.6px;top:1005.3px;width:1005.4px;height:560px;box-sizing:border-box;border:1.6px solid #eceef2;border-radius:21.5px;background:#fff;box-shadow:0 1px 3px rgba(15,23,42,.04);"></div>
<svg style="position:absolute;left:1573.8px;top:1051.5px;" width="28" height="28" viewBox="0 0 24 24" fill="none" stroke="#5b6170" stroke-width="1.7" stroke-linecap="round" stroke-linejoin="round"><line x1="3" x2="21" y1="22" y2="22"/><line x1="6" x2="6" y1="18" y2="11"/><line x1="10" x2="10" y1="18" y2="11"/><line x1="14" x2="14" y1="18" y2="11"/><line x1="18" x2="18" y1="18" y2="11"/><polygon points="12 2 20 7 4 7"/></svg>
<span id="bt" style="position:absolute;top:1054.00px;font-size:23.2px;line-height:1;color:#0b0b0d;white-space:nowrap;left:1614.70px;font-weight:700;letter-spacing:0.089px;">Balance sheet trend</span>
<span id="bd1" style="position:absolute;top:1096.00px;font-size:23.3px;line-height:1;color:#6b7280;white-space:nowrap;left:1574.40px;letter-spacing:0.963px;">Assets, liabilities, and net assets over time.</span>
<div style="position:absolute;left:2319.4px;top:1047.1px;width:174.4px;height:50.7px;box-sizing:border-box;border:1.6px solid #eceef2;border-radius:25px;background:#fcfcfd;"></div>
<svg style="position:absolute;left:2341.5px;top:1060.6px;" width="24" height="24" viewBox="0 0 24 24" fill="none" stroke="#5b6170" stroke-width="2" stroke-linecap="round" stroke-linejoin="round"><path d="M22 12h-2.48a2 2 0 0 0-1.93 1.46l-2.35 8.36a.25.25 0 0 1-.48 0L9.24 2.18a.25.25 0 0 0-.48 0l-2.35 8.36A2 2 0 0 1 4.49 12H2"/></svg>
<span id="bp" style="position:absolute;top:1063.00px;font-size:20.6px;line-height:1;color:#6b7280;white-space:nowrap;left:2380.00px;letter-spacing:0.785px;">4 periods</span>
<div style="position:absolute;left:1574.4px;top:1162px;width:191.5px;height:43.4px;box-sizing:border-box;border:1.6px solid #eceef2;border-radius:21.7px;background:#fff;box-shadow:0 1px 3px rgba(15,23,42,.06);"></div>
<div style="position:absolute;left:1595.7px;top:1175.2px;width:17px;height:17px;background:#264653;border-radius:50%;"></div>
<span id="lg4" style="position:absolute;top:1174.00px;font-size:20px;line-height:1;color:#264653;white-space:nowrap;left:1628.10px;-webkit-text-stroke:0.3px #264653;letter-spacing:0.909px;">Total assets</span>
<div style="position:absolute;left:1781.2px;top:1162px;width:178.1px;height:43.4px;box-sizing:border-box;border:1.6px solid #eceef2;border-radius:21.7px;background:#fff;box-shadow:0 1px 3px rgba(15,23,42,.06);"></div>
<div style="position:absolute;left:1803.5px;top:1175.2px;width:17px;height:17px;background:#e76f51;border-radius:50%;"></div>
<span id="lg5" style="position:absolute;top:1174.00px;font-size:20px;line-height:1;color:#e76f51;white-space:nowrap;left:1834.10px;-webkit-text-stroke:0.3px #e76f51;letter-spacing:1.002px;">Net assets</span>
<div style="position:absolute;left:1574.3px;top:1233.5px;width:920px;height:330px;box-sizing:border-box;border:1.6px solid #eceef2;border-radius:24px;background:#fcfcfc;"></div>
<svg style="position:absolute;left:0;top:0" width="2592" height="1515" viewBox="0 0 2592 1515" fill="none"><g stroke="#eff1f4" stroke-width="1.6" stroke-dasharray="5.3 3.6"><line x1="1680" x2="2451" y1="1273.7" y2="1273.7"/><line x1="1680" x2="2451" y1="1343.9" y2="1343.9"/><line x1="1680" x2="2451" y1="1414.3" y2="1414.3"/><line x1="1680" x2="2451" y1="1484.7" y2="1484.7"/></g><rect x="1718.2" y="1305.5" width="35.7" height="300" rx="7.5" fill="#264653"/><rect x="1797.9" y="1433.7" width="35.7" height="300" rx="7.5" fill="#e76f51"/><rect x="1911.8" y="1280.9" width="35.7" height="300" rx="7.5" fill="#264653"/><rect x="1991.1" y="1412.7" width="35.7" height="300" rx="7.5" fill="#e76f51"/><rect x="2104.9" y="1301.8" width="35.7" height="300" rx="7.5" fill="#264653"/><rect x="2184.7" y="1420.5" width="35.7" height="300" rx="7.5" fill="#e76f51"/><rect x="2298.5" y="1298" width="35.7" height="300" rx="7.5" fill="#264653"/><rect x="2378" y="1457.5" width="35.7" height="300" rx="7.5" fill="#e76f51"/></svg>
<span id="by30m" style="position:absolute;top:1266.00px;font-size:15.5px;line-height:1;color:#6b7280;white-space:nowrap;right:932.34px;letter-spacing:0.546px;">£30m</span>
<span id="by22.5m" style="position:absolute;top:1336.00px;font-size:15.5px;line-height:1;color:#6b7280;white-space:nowrap;right:932.65px;letter-spacing:0.242px;">£22.5m</span>
<span id="by15m" style="position:absolute;top:1407.00px;font-size:15.5px;line-height:1;color:#6b7280;white-space:nowrap;right:933.51px;letter-spacing:-0.620px;">£15m</span>
<span id="by7.5m" style="position:absolute;top:1477.00px;font-size:15.5px;line-height:1;color:#6b7280;white-space:nowrap;right:933.28px;letter-spacing:-0.392px;">£7.5m</span>
</div></body></html>
